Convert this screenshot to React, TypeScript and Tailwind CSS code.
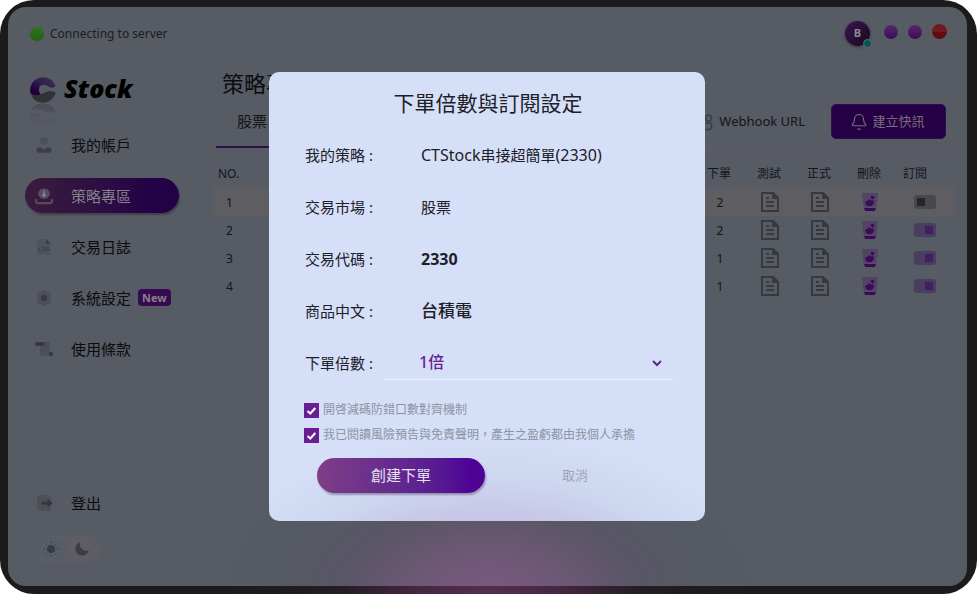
import React, { useState } from 'react';
import { Bell } from 'lucide-react';

const orders = [
    { no: 1, multiple: 2, subscribed: false },
    { no: 2, multiple: 2, subscribed: true },
    { no: 3, multiple: 1, subscribed: true },
    { no: 4, multiple: 1, subscribed: true },
];

const UserIcon = () => (
    <svg width="18" height="18" viewBox="0 0 18 18">
        <circle cx="9" cy="5" r="4" fill="#4d5058" />
        <path d="M4 11.5h2.5L9 14l2.5-2.5H14a2.6 2.6 0 0 1 0 5.2H4a2.6 2.6 0 0 1 0-5.2z" fill="#3d3f45" />
    </svg>
);

const StrategyIcon = () => (
    <svg width="18" height="18" viewBox="0 0 18 18">
        <path d="M1 12v2.2a2 2 0 0 0 2 2h12a2 2 0 0 0 2-2V12" fill="none" stroke="#594a63" strokeWidth="2.2" />
        <path d="M9 1l1.6 1.2 2-.2.8 1.8 1.6 1-.4 1.9.4 1.9-1.6 1-.8 1.8-2-.2L9 12.4l-1.6-1.2-2 .2-.8-1.8-1.6-1 .4-1.9-.4-1.9 1.6-1 .8-1.8 2 .2z" fill="#594a63" />
        <path d="M9 3.5V9M7.2 7.5L9 9.5l1.8-2" fill="none" stroke="#8a8390" strokeWidth="1.4" />
    </svg>
);

const LogIcon = () => (
    <svg width="18" height="18" viewBox="0 0 18 18">
        <path d="M4 1h7l5 5v9a2 2 0 0 1-2 2H4a2 2 0 0 1-2-2V3a2 2 0 0 1 2-2z" fill="#4f535b" />
        <path d="M11 1l5 5h-4a1 1 0 0 1-1-1z" fill="#3b3e43" />
        <path d="M4.5 9v4h2M14 9.5h-2v3h2v-1.3h-.8" fill="none" stroke="#3f4248" />
        <rect x="8" y="9.5" width="2" height="3" fill="none" stroke="#3f4248" />
    </svg>
);

const GearIcon = () => (
    <svg width="18" height="18" viewBox="0 0 18 18">
        <path d="M7 1h4l.7 2.3 2.3-.6 2.5 3.5L15.1 9l1.4 2.8-2.5 3.5-2.3-.6L11 17H7l-.7-2.3-2.3.6-2.5-3.5L2.9 9 1.5 6.2 4 2.7l2.3.6z" fill="#4c5058" />
        <circle cx="9" cy="9" r="3.2" fill="#3a3c41" />
    </svg>
);

const TermsIcon = () => (
    <svg width="18" height="18" viewBox="0 0 18 18">
        <path d="M3 2h10a2 2 0 0 1 2 2v12H8a3 3 0 0 1-3-3V6z" fill="#4c4f57" />
        <rect x="0" y="2" width="10" height="4" rx="2" fill="#37393e" />
        <rect x="14" y="12" width="4" height="4" rx="1.5" fill="#37393e" />
    </svg>
);

const LogoutIcon = () => (
    <svg width="18" height="18" viewBox="0 0 18 18">
        <rect x="2" y="1" width="14" height="16" rx="2.5" fill="#4d5057" />
        <path d="M6.5 7.8h6V5L18 9.2l-5.5 4.3v-2.8h-6z" fill="#36383c" />
    </svg>
);

const DocIcon = () => (
    <svg className="mx-auto" width="18" height="20" viewBox="0 0 18 20">
        <path d="M1 1h11l5 5v13H1z" fill="none" stroke="#36393d" strokeWidth="2" />
        <path d="M11 1l6 6h-6z" fill="#36393d" />
        <path d="M5 6h3M5 10h8M5 14h8" stroke="#36393d" strokeWidth="2" />
    </svg>
);

const TrashIcon = () => (
    <svg width="16" height="18" viewBox="0 0 16 18">
        <path d="M0 0h16l-1.7 14.5H1.7z" fill="#524265" />
        <path d="M2 15h12l-1 3H3z" fill="#3a0a55" />
        <path d="M3.5 8h2L7 6.2 9 7.5h3l-.5 3.5-2 2h-4l-2-2z" fill="#3a0a55" />
        <circle cx="10.5" cy="4.5" r="1.7" fill="#3a0a55" />
    </svg>
);

const Logo = () => (
    <div className="flex gap-2">
        <svg width="26" height="46" viewBox="0 0 26 46">
            <defs>
                <linearGradient id="mark" x1="0" y1="1" x2="1" y2="0">
                    <stop offset="0.2" stopColor="#1d0038" />
                    <stop offset="0.55" stopColor="#30204c" />
                    <stop offset="1" stopColor="#43305b" />
                </linearGradient>
                <linearGradient id="fade" x1="0" y1="0" x2="0" y2="1">
                    <stop offset="0" stopColor="#fff" stopOpacity="0.35" />
                    <stop offset="1" stopColor="#fff" stopOpacity="0.08" />
                </linearGradient>
                <mask id="reflection">
                    <rect y="26" width="26" height="20" fill="url(#fade)" />
                </mask>
            </defs>
            <path d="M.3 16C-.8 7 5 .3 13 .3c6 0 10.500 3.200 12.700 9-3.500 2.400-6.300 1.200-9-.8-4-2.300-8.200.3-7.700 4.500.1 2 .8 3.300 2 4.500C7.500 19 3 19.500.3 16z" fill="url(#mark)" />
            <path d="M1 17.500c4 2.800 8.500 1 12-1.200 4-2.500 8.500-3.500 12.800-.8-1.500 6-6.500 10.200-12.800 10.200-5.500 0-10-3-12-8.200z" fill="#303236" />
            <g mask="url(#reflection)">
                <path d="M1 34c1.500-5 6-7.500 12-7.500s11 3 12.700 8.500c-4.300 2.500-8.300 1-12-1-4-2-8.500-3-12.700 0z" fill="#303236" />
                <path d="M0 40c.5-4 6-5 10-3-2 3 0 6 3 6 4 0 8-4 12.700-1-1 2-2 3-3 4H3c-2-2-3-4-3-6z" fill="#43404c" />
            </g>
        </svg>
        <span className="text-[25px] leading-[22px] font-black italic text-black">Stock</span>
    </div>
);

type NavItemProps = {
    icon: React.ReactNode;
    label: string;
    active?: boolean;
    badge?: string;
};

const NavItem = ({ icon, label, active, badge }: NavItemProps) => (
    <a
        href="#"
        className={
            'flex h-[35px] w-[154px] items-center rounded-full pl-[10px] text-[15px] leading-5 ' +
            (active
                ? 'bg-linear-to-r from-[#3b1b3d] to-[#240046] to-85% text-[#85808a] shadow-[1px_2px_2px_#40404d]'
                : 'text-[#0b0c0e]')
        }
    >
        {icon}
        <span className="ml-[18px] whitespace-nowrap">{label}</span>
        {badge && (
            <span className="ml-[7px] rounded bg-[#370a4f] px-1 text-[11px] leading-[17px] font-bold text-[#86818b]">{badge}</span>
        )}
    </a>
);

const Sidebar = () => (
    <aside className="flex w-[194px] shrink-0 flex-col pt-[17px] pb-6 pl-4">
        <div className="flex items-center gap-1.5 pl-1.5 text-xs leading-5 text-[#1b1d20]">
            <span className="size-3.5 rounded-full bg-linear-to-b from-[#2d7321] to-[#23620f]" />
            Connecting to server
        </div>
        <div className="mt-[33px] h-[50px] pl-1.5">
            <Logo />
        </div>
        <nav className="flex flex-1 flex-col gap-4 pl-px">
            <NavItem icon={<UserIcon />} label="我的帳戶" />
            <NavItem icon={<StrategyIcon />} label="策略專區" active />
            <NavItem icon={<LogIcon />} label="交易日誌" />
            <NavItem icon={<GearIcon />} label="系統設定" badge="New" />
            <NavItem icon={<TermsIcon />} label="使用條款" />
            <div className="mt-auto mb-[15px]">
                <NavItem icon={<LogoutIcon />} label="登出" />
            </div>
        </nav>
        <button type="button" aria-label="切換主題" className="ml-[9px] flex h-[27px] w-[67px] items-center justify-between rounded-full bg-[#5d5d63] px-0.5">
            <span className="flex h-[23px] w-[31px] items-center justify-center rounded-full bg-[#565d66]">
                <svg width="16" height="16" viewBox="0 0 16 16" fill="#363e3f" stroke="#363e3f">
                    <circle cx="8" cy="8" r="4" stroke="none" />
                    <path d="M8 .5V2M8 14v1.5M.5 8H2M14 8h1.5M2.7 2.7l1 1M12.3 12.3l1 1M2.7 13.3l1-1M12.3 3.7l1-1" />
                </svg>
            </span>
            <svg className="mr-[9px]" width="14" height="14" viewBox="0 0 14 14">
                <path d="M5 .3a6.800 6.800 0 1 0 8.800 8.200C9 10 3.500 6 5 .3z" fill="#363e3f" />
            </svg>
        </button>
    </aside>
);

const WindowBar = () => (
    <div className="flex h-[25px] items-center justify-end gap-2.5 pr-2">
        <div className="relative mr-1 flex size-[25px] items-center justify-center rounded-full bg-linear-to-br from-[#3b1450] to-[#150a1f] text-[11px] font-bold text-[#8d8792] shadow-[0_1px_3px_#35353d]">
            B
            <span className="absolute -right-0.5 -bottom-0.5 size-[9px] rounded-full border border-[#5d6b70] bg-[#07574c]" />
        </div>
        <button type="button" aria-label="縮小" className="-mt-1 size-3.5 rounded-full bg-linear-to-b from-[#56286a] to-[#3c0c58]" />
        <button type="button" aria-label="放大" className="-mt-1 size-3.5 rounded-full bg-linear-to-b from-[#56286a] to-[#3c0c58]" />
        <button type="button" aria-label="關閉" className="-mt-1 size-[15px] rounded-full bg-linear-to-b from-[#6f1a20] from-50% to-[#600b10] to-50%" />
    </div>
);

const OrdersTable = () => (
    <table className="mt-[7px] w-full table-fixed text-xs leading-5 text-[#141518]">
        <thead>
            <tr className="h-[33px] *:pt-1">
                <th className="pl-[5px] text-left font-normal">NO.</th>
                <th className="w-[50px] pr-0.5 font-normal">下單</th>
                <th className="w-[50px] pr-0.5 font-normal">測試</th>
                <th className="w-[50px] pr-0.5 font-normal">正式</th>
                <th className="w-[50px] pr-0.5 font-normal">刪除</th>
                <th className="w-[60px] pl-2 text-left font-normal">訂閱</th>
            </tr>
        </thead>
        <tbody>
            {orders.map((order) => (
                <tr key={order.no} className="h-7 first:bg-[#5d5d62]">
                    <td className="pt-0.5 pl-[13px]">{order.no}</td>
                    <td className="pt-0.5 text-center">{order.multiple}</td>
                    <td><DocIcon /></td>
                    <td><DocIcon /></td>
                    <td>
                        <button type="button" aria-label="刪除" className="mx-auto block">
                            <TrashIcon />
                        </button>
                    </td>
                    <td>
                        <input
                            type="checkbox"
                            role="switch"
                            aria-label="訂閱"
                            defaultChecked={order.subscribed}
                            className="mx-auto flex h-3.5 w-[22px] appearance-none items-center rounded-[3px] bg-[#47484b] px-[3px] before:size-2 before:bg-[#242526] checked:justify-end checked:bg-[#4b3d5f] checked:before:bg-[#412060]"
                        />
                    </td>
                </tr>
            ))}
        </tbody>
    </table>
);

const StrategyPage = () => (
    <main className="min-w-0 flex-1 pt-[14px] pr-3 pl-[11px]">
        <WindowBar />
        <h1 className="mt-[21px] pl-[9px] text-[22px] leading-8 text-[#0b0c0e]">策略專區</h1>
        <div className="mt-[5px] ml-[3px] flex items-start justify-between border-b-2 border-[#5e5b64]">
            <button type="button" className="-mb-0.5 h-11 border-b-2 border-[#2f0d47] px-[21px] pb-[7px] text-[15px] text-[#141518]">
                股票
            </button>
            <div className="flex gap-1.5 pr-[9px]">
                <button type="button" className="flex h-[35px] items-center gap-1.5 rounded-md border border-[#5b5d64] px-[19px] text-[13px] text-[#141518]">
                    <svg width="17" height="18" viewBox="0 0 17 18" fill="none" stroke="#3b3e44" strokeWidth="1.6">
                        <circle cx="12.5" cy="5" r="3" />
                        <circle cx="4" cy="5" r="3" />
                        <path d="M9 10h5a1.500 1.500 0 0 1 1.500 1.500V14a2.500 2.500 0 0 1-2.500 2.500H9M4 8v5" />
                    </svg>
                    Webhook URL
                </button>
                <button type="button" className="flex h-[35px] w-[115px] items-center justify-center gap-1 rounded-[5px] border border-[#2f0d50] bg-[#250045] pr-0.5 text-[13px] text-[#77707f]">
                    <Bell size={18} strokeWidth={1.5} />
                    建立快訊
                </button>
            </div>
        </div>
        <OrdersTable />
    </main>
);

const Field = ({ label, children }: { label: string; children: React.ReactNode }) => (
    <div className="flex h-[52px] items-center">
        <dt className="w-[116px] text-[15px] leading-6">{label} :</dt>
        <dd className="leading-6">{children}</dd>
    </div>
);

const CheckRow = ({ label }: { label: string }) => {
    const [checked, setChecked] = useState(true);
    return (
        <label className="flex h-[25px] items-center gap-1 text-xs text-[#8d93a2]">
            <span className="grid size-[15px] place-items-center">
                <input
                    type="checkbox"
                    checked={checked}
                    onChange={(e) => setChecked(e.target.checked)}
                    className="col-start-1 row-start-1 size-[15px] appearance-none border border-[#6a1b9a] checked:bg-[#691e92]"
                />
                {checked && (
                    <svg className="pointer-events-none col-start-1 row-start-1" width="11" height="11" viewBox="0 0 11 11">
                        <path d="M1.5 6l2.8 2.5L9.3 3" fill="none" stroke="#fff" strokeWidth="2" />
                    </svg>
                )}
            </span>
            {label}
        </label>
    );
};

const OrderDialog = () => (
    <form role="dialog" aria-labelledby="dialog-title" className="w-[436px] rounded-[10px] bg-[#d5dff8] px-[35px] pt-[15px] pb-7 text-[#1d2026]">
        <h2 id="dialog-title" className="pl-0.5 text-center text-[21px] leading-8">下單倍數與訂閱設定</h2>
        <dl className="mt-[10px] mb-px pl-px">
            <Field label="我的策略">CTStock<span className="text-[15px]">串接超簡單</span>(2330)</Field>
            <Field label="交易市場"><span className="text-[15px]">股票</span></Field>
            <Field label="交易代碼"><span className="font-bold">2330</span></Field>
            <Field label="商品中文"><span className="text-[17px] font-medium">台積電</span></Field>
        </dl>
        <div className="-mr-[3px] flex h-[52px] items-center pl-px">
            <label htmlFor="multiple" className="w-[79px] text-[15px]">下單倍數 :</label>
            <div className="grid flex-1 items-center border-b border-[#f0f6ff]">
                <select id="multiple" className="col-start-1 row-start-1 h-8 appearance-none bg-transparent pb-0.5 pl-[35px] text-base font-medium text-[#691e92]">
                    <option>1倍</option>
                    <option>2倍</option>
                    <option>3倍</option>
                </select>
                <svg className="pointer-events-none col-start-1 row-start-1 mr-[11px] justify-self-end" width="10" height="8" viewBox="0 0 10 8">
                    <path d="M1 2l4 4 4-4" fill="none" stroke="#691e92" strokeWidth="2" />
                </svg>
            </div>
        </div>
        <div className="mt-2">
            <CheckRow label="開啓減碼防錯口數對齊機制" />
            <CheckRow label="我已閱讀風險預告與免責聲明，產生之盈虧都由我個人承擔" />
        </div>
        <div className="mt-[10px] flex items-center pl-[13px]">
            <button type="submit" className="h-[35px] w-[168px] rounded-full bg-linear-to-r from-[#803d87] to-[#500099] to-90% text-[15px] text-[#ece6f4] shadow-[1px_2px_2px_#9a98b5]">
                創建下單
            </button>
            <button type="button" className="ml-[77px] pt-0.5 text-[13px] text-[#a3a8ba]">取消</button>
        </div>
    </form>
);

export default function App() {
    return (
        <div className="relative flex min-h-screen overflow-hidden rounded-[34px] bg-[#1b1b1b] pt-[7px] pr-[10px] pb-2 pl-2 font-['Noto_Sans','Noto_Sans_CJK_TC',sans-serif]">
            <div className="flex flex-1 rounded-[18px] bg-[#575b64]">
                <Sidebar />
                <StrategyPage />
            </div>
            <div className="absolute inset-0 flex items-center justify-center pr-[3px] pb-0.5">
                <OrderDialog />
            </div>
            <div className="pointer-events-none absolute inset-x-0 bottom-0 h-56 bg-[radial-gradient(ellipse_340px_200px_at_50%_102%,#bc54b25c_0%,#b850b04c_14%,#a84aa438_28%,#67327120_44%,#3838500c_62%,#38385000_85%)]" />
        </div>
    );
}
